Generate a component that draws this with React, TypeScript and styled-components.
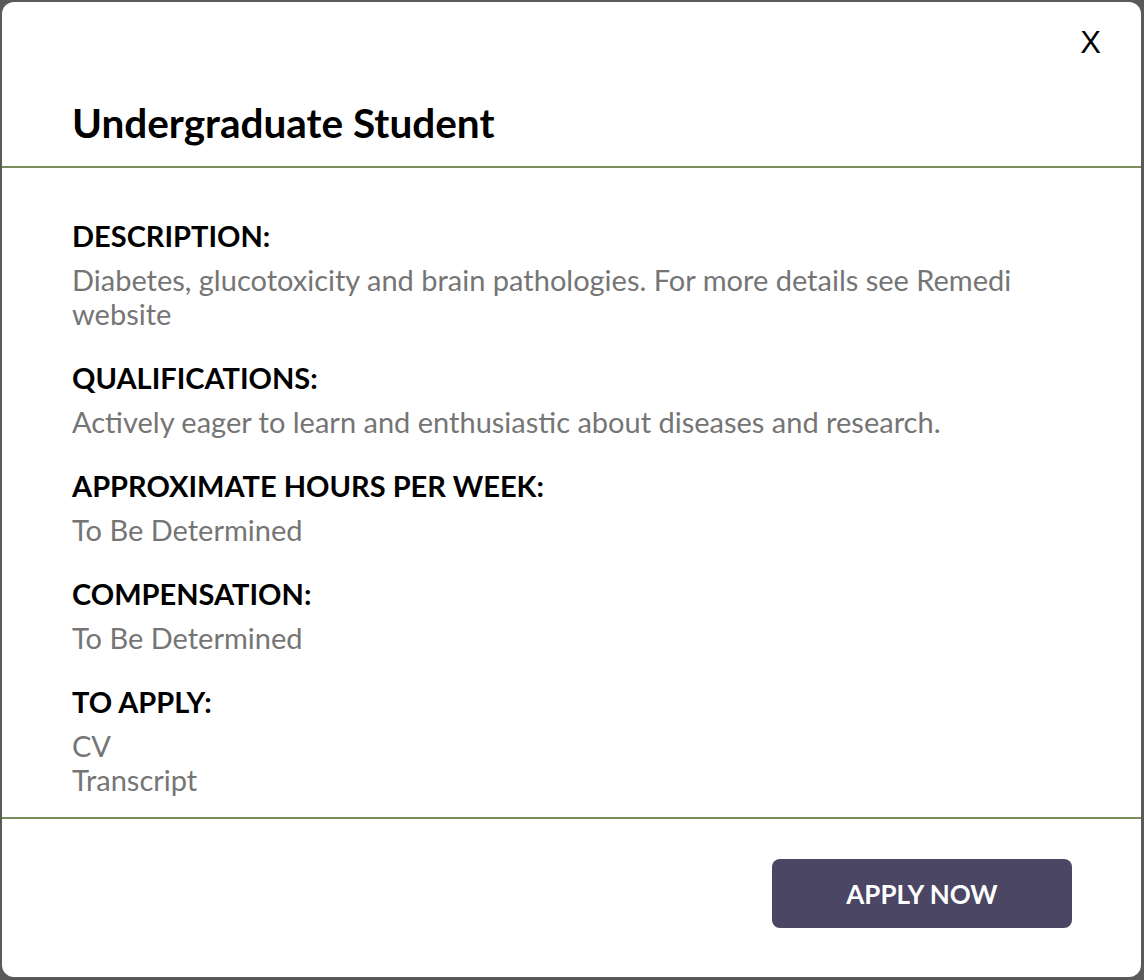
import styled, { createGlobalStyle } from 'styled-components'

const GlobalStyle = createGlobalStyle`
  * { box-sizing: border-box; }
  html, body {
    margin: 0;
    padding: 0;
    background: #5a5a5a;
    font-family: Lato, "Open Sans", sans-serif;
  }
`

type Section = { title: string; lines: string[] }

const sections: Section[] = [
  {
    title: 'DESCRIPTION:',
    lines: ['Diabetes, glucotoxicity and brain pathologies. For more details see Remedi website'],
  },
  {
    title: 'QUALIFICATIONS:',
    lines: ['Actively eager to learn and enthusiastic about diseases and research.'],
  },
  { title: 'APPROXIMATE HOURS PER WEEK:', lines: ['To Be Determined'] },
  { title: 'COMPENSATION:', lines: ['To Be Determined'] },
  { title: 'TO APPLY:', lines: ['CV', 'Transcript'] },
]

export default function App() {
  return (
    <>
      <GlobalStyle />
      <Overlay>
        <Modal>
          <Header>
            <CloseRow>
              <CloseButton aria-label="close">X</CloseButton>
            </CloseRow>
            <Title>Undergraduate Student</Title>
          </Header>
          <Body>
            {sections.map((s) => (
              <Block key={s.title}>
                <BlockTitle>{s.title}</BlockTitle>
                {s.lines.map((l) => (
                  <BlockText key={l}>{l}</BlockText>
                ))}
              </Block>
            ))}
          </Body>
          <Footer>
            <ApplyButton>APPLY NOW</ApplyButton>
          </Footer>
        </Modal>
      </Overlay>
    </>
  )
}

const Overlay = styled.div`
  width: 1144px;
  height: 980px;
  padding: 2px 3px 3px 2px;
  background: #5a5a5a;
`

const Modal = styled.div`
  width: 100%;
  height: 100%;
  background: #ffffff;
  border-radius: 12px;
  display: flex;
  flex-direction: column;
  overflow: hidden;
`

const Header = styled.div`
  padding: 25px 40px 20px 70px;
  border-bottom: 2px solid #7b8d5c;
`

const CloseRow = styled.div`
  display: flex;
  justify-content: flex-end;
`

const CloseButton = styled.button`
  border: none;
  background: none;
  padding: 0;
  font-family: "Liberation Sans", Arial, sans-serif;
  font-size: 31px;
  line-height: 31px;
  color: #000;
  cursor: pointer;
`

const Title = styled.h2`
  margin: 42px 0 0;
  font-size: 40.5px;
  line-height: 46px;
  font-weight: 700;
  color: #000;
`

const Body = styled.div`
  flex: 1;
  padding: 51px 70px 20px;
  border-bottom: 2px solid #7b8d5c;
  display: flex;
  flex-direction: column;
  gap: 30px;
`

const Block = styled.div`
  display: flex;
  flex-direction: column;
`

const BlockTitle = styled.div`
  font-size: 29px;
  line-height: 34px;
  font-weight: 700;
  color: #000;
  margin-bottom: 10px;
`

const BlockText = styled.div`
  font-size: 29px;
  line-height: 34px;
  color: #757575;
`

const Footer = styled.div`
  display: flex;
  justify-content: flex-end;
  padding: 40px 69px 49px;
`

const ApplyButton = styled.button`
  width: 300px;
  height: 69px;
  border: none;
  border-radius: 8px;
  background: #4a4663;
  color: #fff;
  font-family: Lato, sans-serif;
  font-size: 26px;
  font-weight: 700;
  cursor: pointer;
`
